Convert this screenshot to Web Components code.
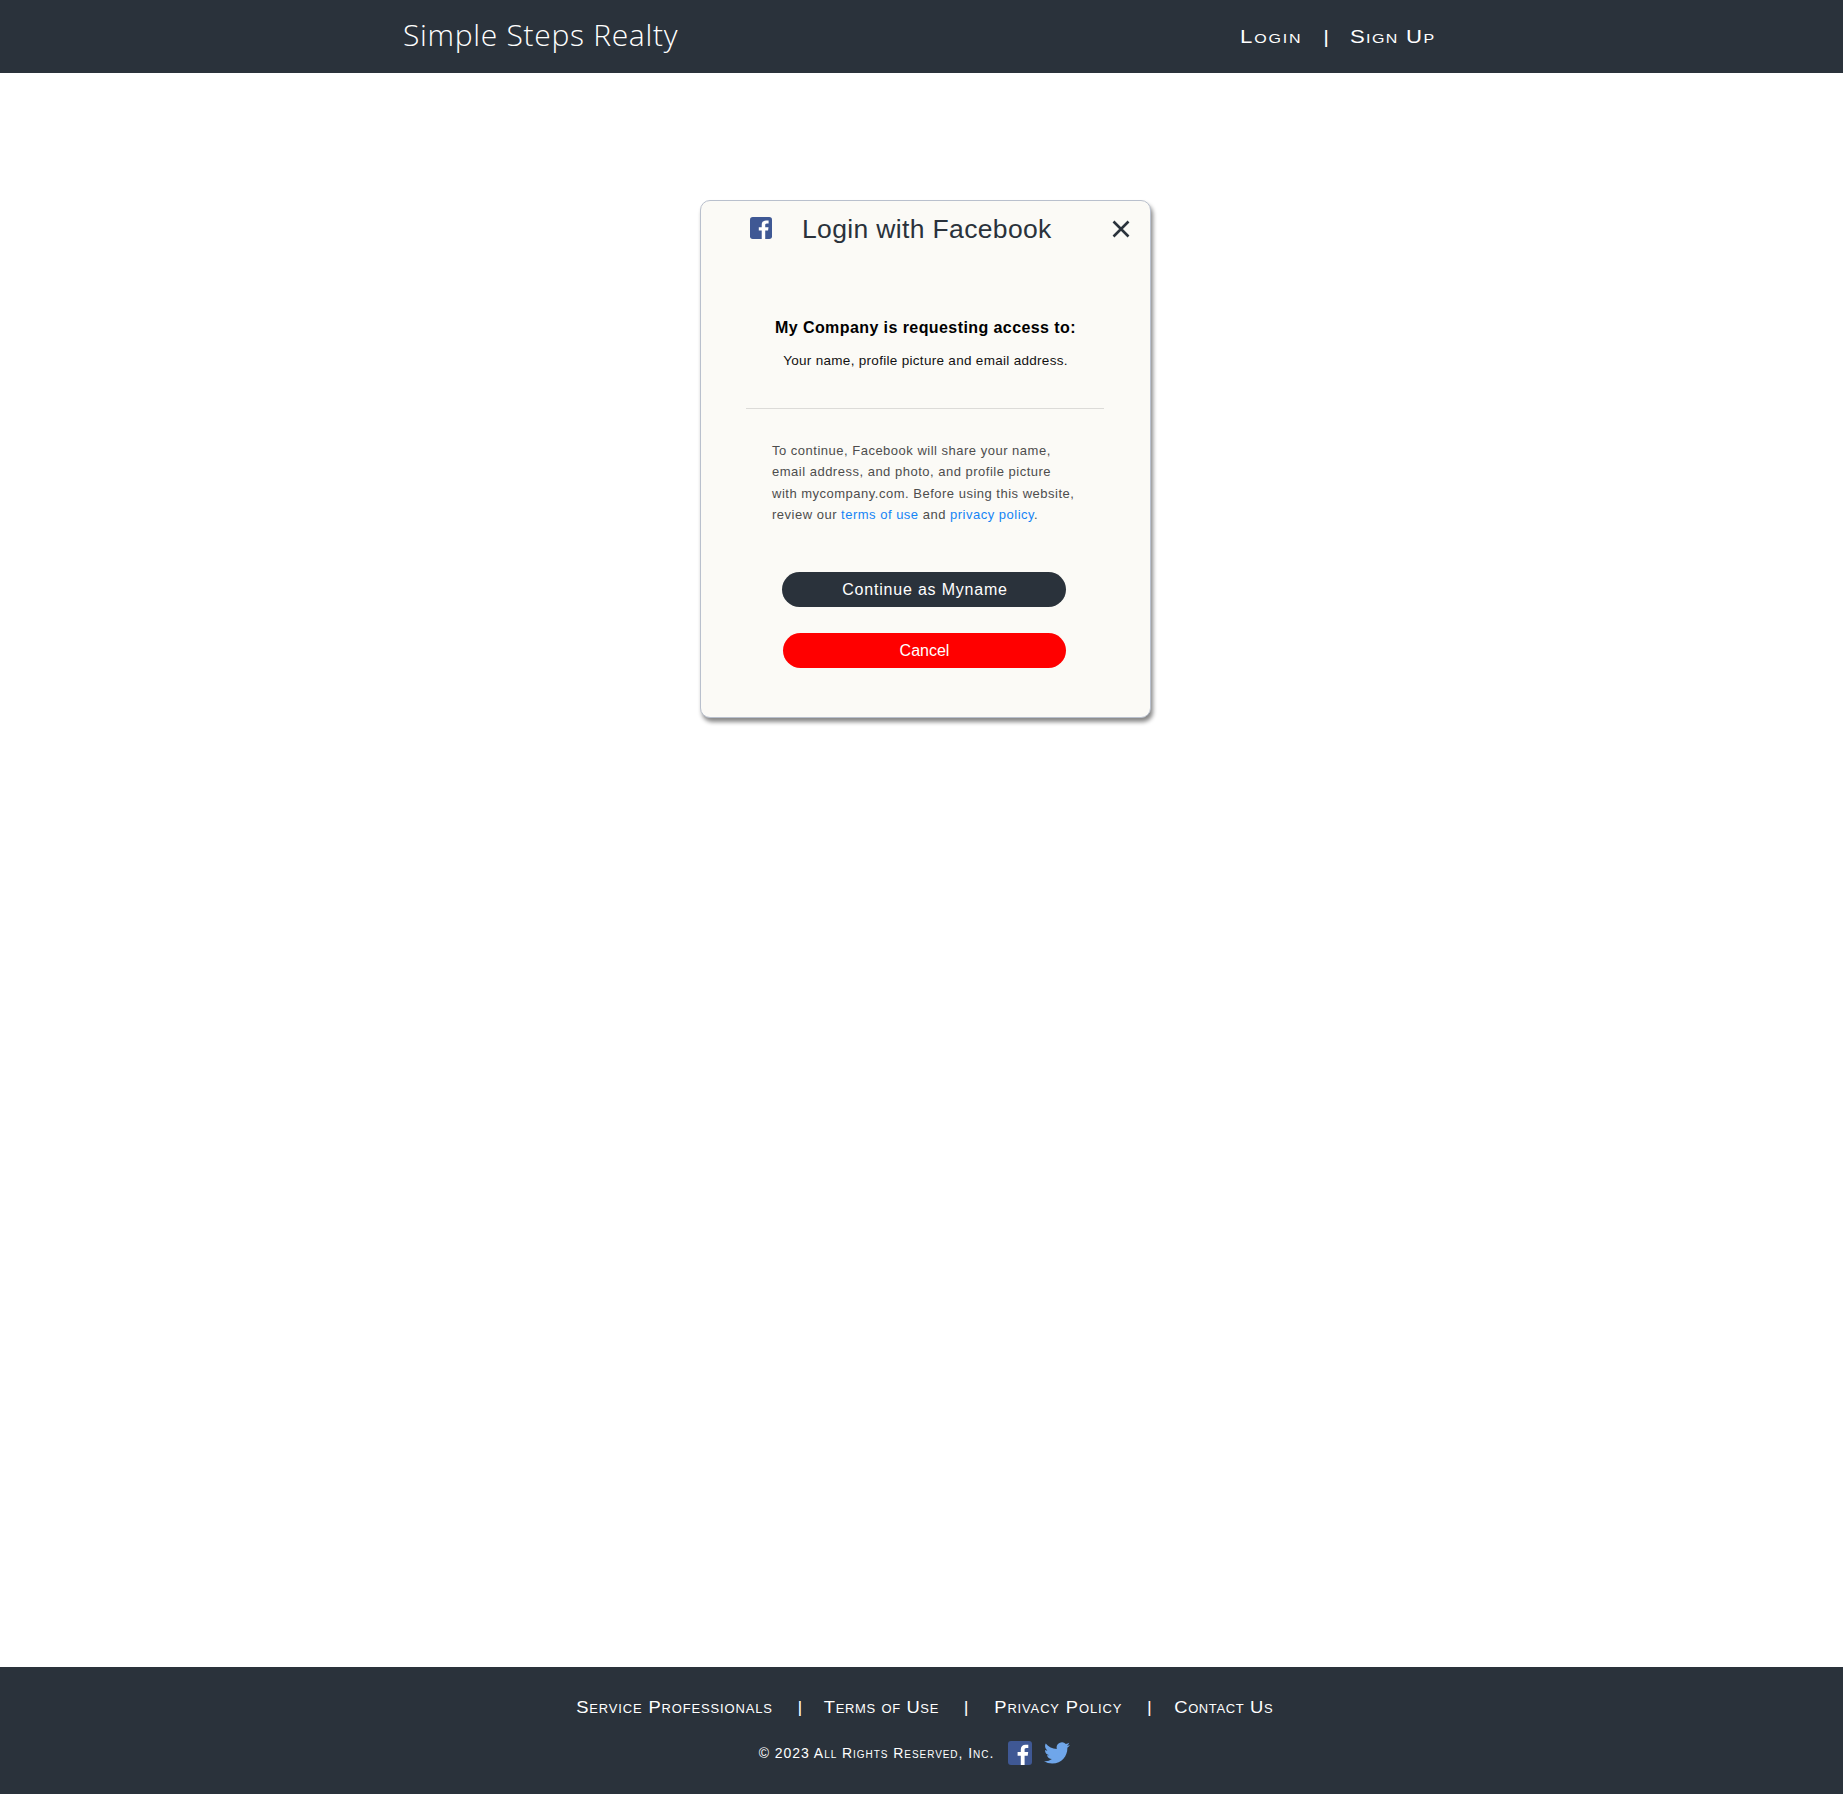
<!DOCTYPE html>
<html lang="en">
<head>
<meta charset="utf-8">
<title>Simple Steps Realty</title>
<style>
  html, body { margin: 0; padding: 0; background: #fff; }
  body { font-family: "Liberation Sans", Arial, sans-serif; }
</style>
</head>
<body>
<realty-page></realty-page>

<script>
const FACEBOOK_SQUARE = `
  <svg viewBox="0 0 24 24" width="100%" height="100%" aria-hidden="true">
    <rect width="24" height="24" rx="3" fill="#3f5894"/>
    <path fill="#fff" d="M16.6 24v-9.3h3.1l.5-3.6h-3.6V8.8c0-1 .3-1.8 1.8-1.8h1.9V3.8c-.3 0-1.5-.1-2.8-.1-2.8 0-4.7 1.7-4.7 4.8v2.6H9.6v3.6h3.2V24z"/>
  </svg>`;

class SiteHeader extends HTMLElement {
  constructor() {
    super();
    const shadow = this.attachShadow({ mode: 'open' });
    shadow.innerHTML = `
      <style>
        :host {
          display: flex;
          align-items: center;
          height: 73px;
          padding: 0 0 0 403px;
          background: #2a323b;
          color: #fff;
        }
        .logo {
          font-family: "Open Sans", sans-serif;
          font-weight: 300;
          font-size: 30px;
          letter-spacing: 0.7px;
          width: 837px;
          margin-top: -5px;
        }
        /* the nav face is an extended grotesque, nothing installed is that wide */
        nav {
          display: flex;
          align-items: center;
          margin-top: 2px;
          font-family: "Liberation Sans", sans-serif;
          font-variant: small-caps;
          font-size: 18px;
          letter-spacing: 1.1px;
          transform: scaleX(1.23);
          transform-origin: left center;
        }
        .login { letter-spacing: 1.48px; }
        .sep {
          margin: 0 16px 0 17px;
        }
      </style>
      <div class="logo">Simple Steps Realty</div>
      <nav><span class="login">Login</span><span class="sep">|</span><span>Sign Up</span></nav>
    `;
  }
}

class PillButton extends HTMLElement {
  constructor() {
    super();
    const shadow = this.attachShadow({ mode: 'open' });
    shadow.innerHTML = `
      <style>
        :host {
          display: flex;
          align-items: center;
          justify-content: center;
          box-sizing: border-box;
          height: 35px;
          padding-left: var(--pill-indent, 0);
          border-radius: 18px;
          background: var(--pill-bg, #2a323b);
          color: #fff;
          font-size: 16px;
          letter-spacing: var(--pill-spacing, 0.8px);
          cursor: pointer;
        }
      </style>
      <slot></slot>
    `;
  }
}

class LoginModal extends HTMLElement {
  constructor() {
    super();
    const shadow = this.attachShadow({ mode: 'open' });
    shadow.innerHTML = `
      <style>
        :host {
          display: block;
          box-sizing: border-box;
          width: 451px;
          height: 518px;
          background: #fbfaf6;
          border: 1px solid #b9c0cd;
          border-radius: 10px;
          box-shadow: 2px 4px 4px #888;
          font-family: "Liberation Sans", Arial, sans-serif;
        }
        .head {
          display: flex;
          align-items: center;
          height: 44px;
          padding: 6px 20px 0 49px;
        }
        .fb { width: 22px; height: 22px; margin-top: -2px; }
        h2 {
          margin: 0 0 0 30px;
          font-size: 26.5px;
          font-weight: 400;
          color: #2a323b;
          letter-spacing: 0.35px;
          flex: 1;
        }
        .close { width: 18px; height: 18px; }
        h3 {
          margin: 67px 0 0;
          font-size: 16px;
          line-height: 20px;
          font-weight: 700;
          letter-spacing: 0.42px;
          color: #000;
          text-align: center;
        }
        .scope {
          margin: 13px 0 0;
          font-size: 13.5px;
          line-height: 20px;
          letter-spacing: 0.3px;
          color: #111;
          text-align: center;
        }
        hr {
          margin: 37px 46px 0 45px;
          border: 0;
          border-top: 1px solid #dcdbd8;
        }
        .terms {
          margin: 31px 0 0 71px;
          width: 320px;
          font-size: 13px;
          line-height: 21.3px;
          letter-spacing: 0.5px;
          color: #4d4d4d;
        }
        a { color: #1584f5; text-decoration: none; }
        .actions {
          display: flex;
          flex-direction: column;
          gap: 26px;
          margin: 47px 0 0 81px;
          width: 284px;
        }
        .continue { --pill-indent: 2px; }
        .cancel { --pill-bg: #ff0000; --pill-spacing: 0; margin-left: 1px; }
      </style>
      <div class="head">
        <span class="fb">${FACEBOOK_SQUARE}</span>
        <h2>Login with Facebook</h2>
        <svg class="close" viewBox="0 0 18 18" aria-hidden="true">
          <path d="M1.5 1.5l15 15M16.5 1.5l-15 15" stroke="#2a323b" stroke-width="2.6" fill="none"/>
        </svg>
      </div>
      <h3>My Company is requesting access to:</h3>
      <p class="scope">Your name, profile picture and email address.</p>
      <hr>
      <p class="terms">To continue, Facebook will share your name,<br>email address, and photo, and profile picture<br>with mycompany.com. Before using this website,<br>review our <a href="#">terms of use</a> and <a href="#">privacy policy</a>.</p>
      <div class="actions">
        <pill-button class="continue">Continue as Myname</pill-button>
        <pill-button class="cancel">Cancel</pill-button>
      </div>
    `;
  }
}

class SiteFooter extends HTMLElement {
  constructor() {
    super();
    const shadow = this.attachShadow({ mode: 'open' });
    shadow.innerHTML = `
      <style>
        :host {
          display: flex;
          flex-direction: column;
          align-items: center;
          box-sizing: border-box;
          height: 127px;
          padding: 30px 0 0 0;
          background: #2a323b;
          color: #fff;
          font-family: "Liberation Sans", sans-serif;
          font-variant: small-caps;
        }
        .links {
          display: flex;
          align-items: center;
          margin-left: 6px;
          font-size: 17px;
          letter-spacing: 0.8px;
          line-height: 22px;
          transform: scaleX(1.08);
        }
        .sep { margin: 0 23px; }
        .sep.first { margin-right: 19px; }
        .sep.last { margin-right: 20px; }
        .tight { letter-spacing: 0.6px; }
        .legal {
          display: flex;
          align-items: center;
          margin: 21px 14px 0 0;
          font-size: 14px;
          letter-spacing: 0.95px;
        }
        .icon { display: block; width: 24px; height: 24px; margin-left: 14px; }
        .bird { margin-left: 12px; width: 26px; height: 26px; margin-bottom: -1px; }
      </style>
      <div class="links">
        <span>Service Professionals</span><span class="sep first">|</span>
        <span class="tight">Terms of Use</span><span class="sep">|</span>
        <span>Privacy Policy</span><span class="sep last">|</span>
        <span class="tight">Contact Us</span>
      </div>
      <div class="legal">
        <span>© 2023 All Rights Reserved, Inc.</span>
        <span class="icon">${FACEBOOK_SQUARE}</span>
        <svg class="icon bird" viewBox="0 0 24 24" aria-hidden="true">
          <path fill="#6fa6ea" d="M23.95 4.57a10 10 0 0 1-2.82.77 4.96 4.96 0 0 0 2.16-2.72c-.95.55-2 .95-3.13 1.18a4.92 4.92 0 0 0-8.38 4.48C7.69 8.1 4.07 6.13 1.64 3.16a4.82 4.82 0 0 0-.67 2.48c0 1.71.87 3.21 2.19 4.1a4.9 4.9 0 0 1-2.23-.62v.06a4.92 4.92 0 0 0 3.95 4.83 5 5 0 0 1-2.21.08 4.94 4.94 0 0 0 4.6 3.42A9.87 9.87 0 0 1 0 19.54a14 14 0 0 0 7.56 2.21c9.05 0 14-7.5 14-13.98 0-.21 0-.42-.02-.63a9.94 9.94 0 0 0 2.41-2.57z"/>
        </svg>
      </div>
    `;
  }
}

class RealtyPage extends HTMLElement {
  constructor() {
    super();
    const shadow = this.attachShadow({ mode: 'open' });
    shadow.innerHTML = `
      <style>
        :host {
          display: flex;
          flex-direction: column;
          min-height: 1794px;
        }
        main {
          flex: 1;
          padding: 127px 0 0 700px;
        }
      </style>
      <site-header></site-header>
      <main><login-modal></login-modal></main>
      <site-footer></site-footer>
    `;
  }
}

customElements.define('site-header', SiteHeader);
customElements.define('pill-button', PillButton);
customElements.define('login-modal', LoginModal);
customElements.define('site-footer', SiteFooter);
customElements.define('realty-page', RealtyPage);
</script>
</body>
</html>
